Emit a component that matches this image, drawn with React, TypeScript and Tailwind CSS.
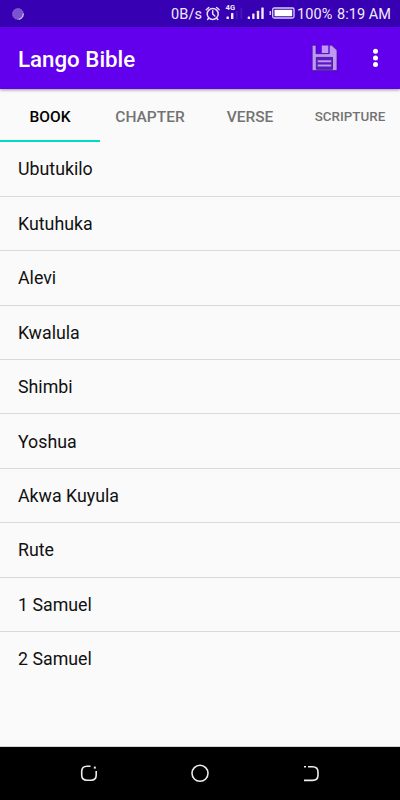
import React from "react";

const books = ["Ubutukilo", "Kutuhuka", "Alevi", "Kwalula", "Shimbi", "Yoshua", "Akwa Kuyula", "Rute", "1 Samuel", "2 Samuel"];

function StatusBar() {
  return (
    <div className="flex h-[27px] shrink-0 items-center bg-[#3700b3] text-[#f0ebfa]">
      <svg className="ml-3 h-[14px] w-[13px]" viewBox="0 0 13 14">
        <circle cx="6" cy="7" r="5.4" fill="#7b53ce" stroke="#9c80dc" strokeDasharray="1.2 .8" />
        <path d="M11.2 6.5A5.3 5.3 0 0 1 6.5 12.300" fill="none" stroke="#cdbfee" strokeWidth="1.1" />
      </svg>
      <span className="ml-[146px] w-[31px] whitespace-nowrap pt-[2px] text-[14.5px] leading-[25px] tracking-[0.1px]">0B/s</span>
      <svg className="ml-[3px] h-[27px] w-[90px]" viewBox="205 0 90 27" fill="none">
        <g stroke="#e6def8" strokeWidth="1.5" strokeLinecap="round">
          <circle cx="212.7" cy="14" r="5.5" />
          <path d="M212.7 10.7V14l2.1 2M206.3 9.8l2.5-2.3M219.1 9.8l-2.5-2.3M208.7 18.2l-1.1 1.3M216.7 18.2l1.1 1.3" />
        </g>
        <text x="225.6" y="10.300" fill="#f0ebfa" fontSize="8" fontWeight="700" fontFamily="Roboto" textLength="9.500" lengthAdjust="spacingAndGlyphs">4G</text>
        <g fill="#f0ebfa">
          <rect x="226.5" y="16.5" width="2.4" height="2.5" rx=".5" />
          <rect x="231" y="13" width="2.4" height="6" rx=".5" />
          <rect x="247.7" y="16.5" width="2.3" height="2.5" rx=".5" />
          <rect x="252.2" y="13.5" width="2.3" height="5.5" rx=".5" />
          <rect x="256.8" y="10.700" width="2.4" height="8.300" rx=".5" />
          <rect x="261.3" y="7.500" width="2.4" height="11.500" rx=".5" />
        </g>
        <path d="M236.8 11v8M241.3 8v11" stroke="#4717ba" strokeWidth="1.8" />
        <path d="M270.3 11v4" stroke="#d8ccf4" strokeWidth="1.5" />
        <rect x="272.7" y="8" width="21.3" height="10" rx="1.5" stroke="#d8ccf4" strokeWidth="1.3" />
        <rect x="274.5" y="9.8" width="17.7" height="6.5" rx=".5" fill="#fff" />
      </svg>
      <span className="ml-[2px] w-[36px] whitespace-nowrap pt-[2px] text-[14.5px] leading-[25px] tracking-[0.1px]">100%</span>
      <span className="ml-[4px] whitespace-nowrap pt-[2px] text-[14.5px] leading-[25px] tracking-[0.05px]">8:19 AM</span>
    </div>
  );
}

function Header() {
  return (
    <header className="z-10 flex h-[62px] shrink-0 items-center bg-[#6200ee] pl-[18px] text-white shadow-[0_1px_3px_rgba(0,0,0,0.4)]">
      <h1 className="w-[293px] pt-[2px] text-[22.3px] leading-[30px] font-medium">Lango Bible</h1>
      <svg className="h-[28px] w-[28px]" viewBox="0 0 28 28" strokeLinejoin="round">
        <path d="M1.200 1.300H5V9.700H18.300V1.300H20.800L26 6.200V26.500H1.200z" fill="#bf98f6" stroke="#3c168c" strokeWidth=".7" />
        <path d="M10.800 1.500H17.300V9H10.800z" fill="#bf98f6" />
        <path d="M5.300 13.400H21.500V25.300H5.300z" fill="#6319d4" stroke="#3c168c" strokeWidth=".8" />
        <path d="M6.500 16.100H20.400V18.600H6.500zM6.500 20.300H20.400V22.800H6.500z" fill="#bf98f6" stroke="#3c168c" strokeWidth=".4" />
      </svg>
      <svg className="ml-[31px] h-[22px] w-[10px]" viewBox="0 0 10 22" fill="white">
        <circle cx="5.500" cy="4.200" r="2.500" />
        <circle cx="5.500" cy="10.900" r="2.500" />
        <circle cx="5.500" cy="17.600" r="2.500" />
      </svg>
    </header>
  );
}

function Tabs() {
  return (
    <nav className="grid h-[53px] shrink-0 grid-cols-4 text-center text-[15.5px] leading-[46px] font-medium text-[#737373]">
      <div className="border-b-2 border-[#03dac5] pt-[5px] text-black">BOOK</div>
      <div className="pt-[5px]">CHAPTER</div>
      <div className="pt-[5px]">VERSE</div>
      <div className="pt-[5px] text-[13.4px]">SCRIPTURE</div>
    </nav>
  );
}

export default function App() {
  return (
    <div className="flex h-[800px] w-[400px] flex-col overflow-hidden bg-[#fafafa] font-[Roboto,sans-serif]">
      <StatusBar />
      <Header />
      <Tabs />
      <main className="flex-1 pt-[0.2px]">
        {books.map((book) => (
          <div key={book} className="flex h-[54.44px] items-center border-b border-[#dadada] pt-[1.6px] pl-[18px] text-[17.8px] text-[#111] last:border-transparent">
            {book}
          </div>
        ))}
      </main>
      <footer className="flex h-[54px] shrink-0 items-center justify-center border-t border-[#d0d4d4] bg-black">
        <svg className="h-[53px] w-full" viewBox="0 747 400 53" fill="none" stroke="#eeeeee" strokeWidth="1.600">
          <path d="M90.500 766.300H87Q81.700 766.300 81.700 771.500V775Q81.700 780.200 87 780.200H91Q96.200 780.200 96.200 775V771" />
          <path d="M93.800 767.600h2" strokeWidth="2" />
          <circle cx="200" cy="773.300" r="8" />
          <path d="M308 766.700H312.500Q318 766.700 318 772V775Q318 780.400 312.500 780.400H304M304 766.700h2" />
        </svg>
      </footer>
    </div>
  );
}
